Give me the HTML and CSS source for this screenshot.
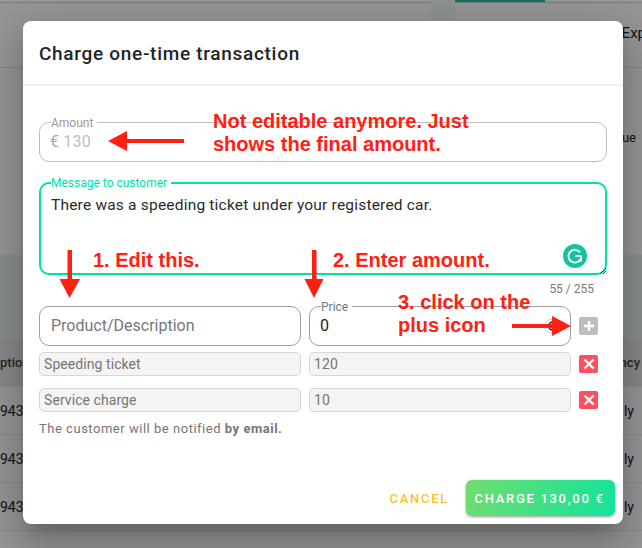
FILE: index.html
```html
<!DOCTYPE html>
<html lang="en">
<head>
  <meta charset="UTF-8">
  <title>Charge one-time transaction</title>
  <link rel="stylesheet" href="styles.css">
</head>
<body>

  <!-- page behind the dialog -->
  <div class="backdrop">
    <div class="top-bar"><span class="tab-side"></span><span class="tab-active"></span></div>
    <div class="tab-row"><span>Exp</span></div>
    <div class="summary-row"><span>ue</span></div>
    <div class="table-toolbar"></div>
    <div class="table-head"><span>ption</span><span>ncy</span></div>
    <div class="table-row"><span>943</span><span>ly</span></div>
    <div class="table-row"><span>943</span><span>ly</span></div>
    <div class="table-row"><span>943</span><span>ly</span></div>
  </div>
  <div class="overlay"></div>

  <div class="dialog">
    <div class="dialog-title">Charge one-time transaction</div>

    <div class="dialog-content">
      <fieldset class="field field-amount">
        <legend>Amount</legend>
        <div class="field-value"><span class="currency">€</span> 130</div>
      </fieldset>

      <fieldset class="field field-message">
        <legend>Message to customer</legend>
        <div class="field-value">There was a speeding ticket under your registered car.</div>
        <span class="grammarly">
          <svg width="24" height="24" viewBox="0 0 24 24">
            <circle cx="12" cy="12" r="12" fill="#15c39a"/>
            <path d="M17.2 8.6 A6.4 6.4 0 1 0 17.6 15" fill="none" stroke="#fff" stroke-width="1.8"/>
            <path d="M12.4 12.2 H18 V17.4" fill="none" stroke="#fff" stroke-width="1.8"/>
          </svg>
        </span>
        <svg class="grip" width="6" height="6" viewBox="0 0 6 6">
          <path d="M0 6 L6 0 M3 6 L6 3" stroke="#444" stroke-width="1"/>
        </svg>
      </fieldset>
      <div class="counter">55 / 255</div>

      <div class="line-row">
        <div class="field field-big placeholder">Product/Description</div>
        <fieldset class="field field-price">
          <legend>Price</legend>
          <div class="field-value">0</div>
          <svg class="spinner" width="14" height="14" viewBox="0 0 14 14">
            <circle cx="7" cy="7" r="6.500" fill="#fff" stroke="#ccc"/>
            <path d="M4 6 L7 3 L10 6 M4 8 L7 11 L10 8" fill="none" stroke="#333" stroke-width="1.400"/>
          </svg>
        </fieldset>
        <span class="icon-btn icon-add">
          <svg width="12" height="12" viewBox="0 0 12 12"><path d="M6 1 V11 M1 6 H11" stroke="#fff" stroke-width="2.400"/></svg>
        </span>
      </div>

      <div class="line-row line-item">
        <div class="item-box">Speeding ticket</div>
        <div class="item-box">120</div>
        <span class="icon-btn icon-remove">
          <svg width="12" height="12" viewBox="0 0 12 12"><path d="M1.500 1.500 L10.500 10.500 M10.500 1.500 L1.500 10.500" stroke="#fff" stroke-width="2.400"/></svg>
        </span>
      </div>
      <div class="line-row line-item">
        <div class="item-box">Service charge</div>
        <div class="item-box">10</div>
        <span class="icon-btn icon-remove">
          <svg width="12" height="12" viewBox="0 0 12 12"><path d="M1.500 1.500 L10.500 10.500 M10.500 1.500 L1.500 10.500" stroke="#fff" stroke-width="2.400"/></svg>
        </span>
      </div>

      <p class="notice">The customer will be notified <strong>by email.</strong></p>
    </div>

    <div class="dialog-actions">
      <button type="button" class="btn-cancel">CANCEL</button>
      <button type="button" class="btn-charge">CHARGE 130,00 €</button>
    </div>
  </div>

  <!-- red notes drawn on top of the screenshot -->
  <svg class="arrows" width="642" height="548" viewBox="0 0 642 548">
    <g fill="#ff2012">
      <path d="M108 141 L127 131 V139 H184 V143 H127 V151 Z"/>
      <path d="M67.500 250 H72 V279 H80 L69.500 298 L59.500 279 H67.500 Z"/>
      <path d="M312 250 H316.500 V279 H323.500 L314 298 L304.500 279 H312 Z"/>
      <path d="M512 324 H552 V316 L571 326 L552 336 V328 H512 Z"/>
    </g>
  </svg>
  <div class="note note-amount">Not editable anymore. Just<br>shows the final amount.</div>
  <div class="note note-edit">1. Edit this.</div>
  <div class="note note-enter">2. Enter amount.</div>
  <div class="note note-plus">3. click on the<br>plus icon</div>

</body>
</html>
```

FILE: styles.css
```css
html, body {
  margin: 0;
  height: 100%;
}

body {
  font-family: Roboto, "Liberation Sans", sans-serif;
  background-color: #fafafa;
  overflow: hidden;
  position: relative;
}

.backdrop {
  height: 548px;
  color: #222;
  font-size: 14px;
}

.top-bar {
  height: 2px;
  border-bottom: 1px solid #ccc;
  padding-left: 431px;
  display: flex;
}

.tab-side {
  width: 24px;
  height: 21px;
  background-color: #eef4f4;
}

.tab-active {
  display: block;
  width: 90px;
  height: 2px;
  background-color: #19c5a0;
}

.tab-row {
  height: 64px;
  border-bottom: 1px solid #e0e0e0;
  display: flex;
  justify-content: flex-end;
  align-items: center;
  font-size: 15px;
}

.tab-row span {
  margin-right: -4px;
  padding-bottom: 4px;
}

.summary-row {
  height: 187px;
  display: flex;
  justify-content: flex-end;
  padding-top: 62px;
  box-sizing: border-box;
  font-size: 13px;
}

.summary-row span {
  margin-right: 6px;
}

.table-toolbar {
  height: 84px;
  background-color: #e6eded;
}

.table-head {
  height: 47px;
  background-color: #e4e4e4;
  display: flex;
  justify-content: space-between;
  align-items: center;
  font-size: 13px;
  font-weight: 500;
  color: #444;
  padding-right: 2px;
  border-bottom: 1px solid #e6e6e6;
}

.table-row {
  height: 47px;
  display: flex;
  justify-content: space-between;
  align-items: center;
  padding-right: 8px;
  border-bottom: 1px solid #e6e6e6;
}

.overlay {
  position: absolute;
  top: 0;
  left: 0;
  right: 0;
  bottom: 0;
  background-color: rgba(0, 0, 0, 0.4);
}

.dialog {
  position: absolute;
  top: 21px;
  left: 23px;
  width: 600px;
  height: 503px;
  background: white;
  border-radius: 8px;
  display: flex;
  flex-direction: column;
  box-shadow: 0 11px 15px -7px rgba(0,0,0,0.2), 0 24px 38px 3px rgba(0,0,0,0.14), 0 9px 46px 8px rgba(0,0,0,0.12);
}

.dialog-title {
  height: 63px;
  border-bottom: 2px solid #f1f1f1;
  padding-left: 16px;
  line-height: 65px;
  font-size: 19px;
  font-weight: 500;
  letter-spacing: 0.7px;
  color: #212529;
}

.dialog-content {
  flex: 1;
  padding: 29px 16px 0;
}

.field {
  margin: 0;
  padding: 0 11px;
  border: 1px solid #bdbdbd;
  border-radius: 10px;
  box-sizing: border-box;
  min-width: 0;
  position: relative;
}

.field legend {
  font-size: 12px;
  line-height: 14px;
  color: #999;
  padding: 1px 4px 0 0;
}

.field-value {
  font-size: 16px;
  line-height: 20px;
  letter-spacing: 0.2px;
}

.field-amount {
  width: 568px;
  height: 47px;
}

.field-amount .field-value {
  color: #bdbdbd;
  margin: 2px 0 0 -1px;
}

.currency {
  color: #aaa;
}

.field-message {
  width: 568px;
  height: 100px;
  margin-top: 13px;
  border: 2px solid #00dfa8;
  padding: 0 10px;
}

.field-message legend {
  color: #00dfa8;
}

.field-message .field-value {
  font-size: 15.500px;
  line-height: 22px;
  color: #2a2a2a;
  margin-top: 4px;
}

.grammarly {
  position: absolute;
  right: 18px;
  bottom: 5px;
  height: 24px;
}

.grip {
  position: absolute;
  right: -1px;
  bottom: -1px;
}

.counter {
  width: 555px;
  text-align: right;
  font-size: 12px;
  line-height: 14px;
  color: #777;
  margin-top: 7px;
}

.line-row {
  display: grid;
  grid-template-columns: 262px 262px 19px;
  column-gap: 8px;
  align-items: end;
  margin-top: 3px;
}

.field-big {
  height: 40px;
  border-color: #9e9e9e;
  line-height: 38px;
}

.placeholder {
  font-size: 16px;
  color: #777;
}

.field-price {
  height: 47px;
  border-color: #9e9e9e;
}

.field-price legend {
  color: #777;
}

.field-price .field-value {
  color: #222;
  margin: 2px 0 0 -1px;
}

.spinner {
  position: absolute;
  right: 12px;
  top: 5px;
}

.icon-btn {
  width: 19px;
  height: 18px;
  border-radius: 2px;
  display: flex;
  align-items: center;
  justify-content: center;
  margin-bottom: 11px;
}

.icon-add {
  background-color: #bdbdbd;
}

.icon-remove {
  background-color: #ff4f5e;
  margin-bottom: 3px;
}

.line-item {
  margin-top: 6px;
}

.line-item + .line-item {
  margin-top: 12px;
}

.item-box {
  height: 24px;
  box-sizing: border-box;
  background-color: #f4f4f4;
  border: 1px solid #d6d6d6;
  border-radius: 5px;
  padding-left: 4px;
  line-height: 22px;
  font-size: 14px;
  letter-spacing: 0.07px;
  color: #757575;
}

.notice {
  margin: 9px 0 0;
  font-size: 13px;
  letter-spacing: 0.52px;
  line-height: 16px;
  color: #757575;
}

.dialog-actions {
  display: flex;
  justify-content: flex-end;
  align-items: center;
  gap: 17px;
  padding: 0 8px 8px 0;
}

button {
  font-family: Roboto, "Liberation Sans", sans-serif;
  font-size: 13px;
  font-weight: 500;
  letter-spacing: 1.7px;
  border: none;
  cursor: pointer;
}

.btn-cancel {
  background: none;
  color: #fcc02e;
  padding: 0;
}

.btn-charge {
  width: 149px;
  height: 36px;
  padding: 0 2px 0 0;
  color: white;
  border-radius: 6px;
  background: linear-gradient(100deg, #70dd70, #14e39c);
  box-shadow: 0 1px 3px rgba(0,0,0,0.4);
}

.arrows {
  position: absolute;
  top: 0;
  left: 0;
}

.note {
  position: absolute;
  font-family: "Liberation Sans", Arial, sans-serif;
  font-size: 20px;
  font-weight: bold;
  line-height: 23px;
  color: #ff2012;
}

.note-amount {
  top: 110px;
  left: 213px;
}

.note-edit {
  top: 249px;
  left: 93px;
}

.note-enter {
  top: 249px;
  left: 333px;
}

.note-plus {
  top: 291px;
  left: 398px;
}
```
